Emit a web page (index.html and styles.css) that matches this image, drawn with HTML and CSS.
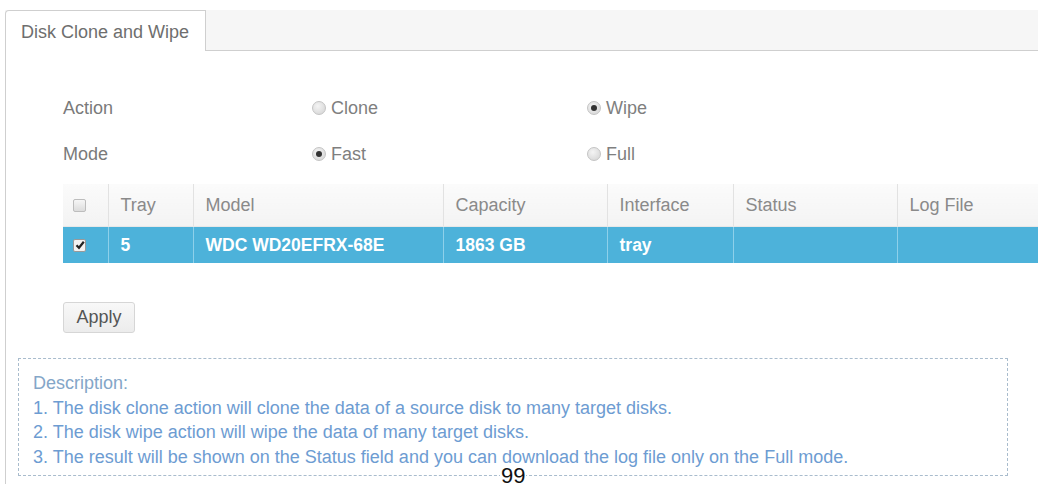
FILE: index.html
```html
<!DOCTYPE html>
<html>
<head>
<meta charset="utf-8">
<link rel="stylesheet" href="styles.css">
</head>
<body>
<div class="page">
  <div class="tabbar">
    <div class="tab">Disk Clone and Wipe</div>
  </div>
  <div class="content">
    <div class="form">
      <div class="label">Action</div>
      <label class="opt"><span class="radio"></span>Clone</label>
      <label class="opt"><span class="radio on"></span>Wipe</label>
      <div class="label">Mode</div>
      <label class="opt"><span class="radio on"></span>Fast</label>
      <label class="opt"><span class="radio"></span>Full</label>
    </div>
    <table class="grid">
      <colgroup>
        <col class="c-chk"><col class="c-tray"><col class="c-model"><col class="c-cap"><col class="c-if"><col class="c-status"><col class="c-log">
      </colgroup>
      <thead>
        <tr>
          <th><span class="cb"></span></th>
          <th>Tray</th>
          <th>Model</th>
          <th>Capacity</th>
          <th>Interface</th>
          <th>Status</th>
          <th>Log File</th>
        </tr>
      </thead>
      <tbody>
        <tr class="sel">
          <td><span class="cb checked"><svg viewBox="0 0 12 12" width="12" height="12"><path d="M2.5 6.2 L5 8.8 L9.8 2.8" fill="none" stroke="#222" stroke-width="2.2"/></svg></span></td>
          <td>5</td>
          <td>WDC WD20EFRX-68E</td>
          <td>1863 GB</td>
          <td>tray</td>
          <td></td>
          <td></td>
        </tr>
      </tbody>
    </table>
    <button class="btn">Apply</button>
    <div class="desc">
      <div class="desc-title">Description:</div>
      <div>1. The disk clone action will clone the data of a source disk to many target disks.</div>
      <div>2. The disk wipe action will wipe the data of many target disks.</div>
      <div>3. The result will be shown on the Status field and you can download the log file only on the Full mode.</div>
    </div>
  </div>
  <div class="pagenum">99</div>
</div>
</body>
</html>
```

FILE: styles.css
```css
html, body {
  margin: 0;
  padding: 0;
  background: #fff;
}
body {
  font-family: "Liberation Sans", Arial, sans-serif;
  font-size: 18px;
  color: #7a7a7a;
  overflow: hidden;
}
.page {
  position: relative;
  padding: 10px 4px 0 5px;
  height: 474px;
}
.tabbar {
  display: flex;
  height: 40px;
  background: #f6f6f6;
  border-bottom: 1px solid #cfcfcf;
}
.tab {
  width: 184px;
  height: 40px;
  padding-left: 15px;
  line-height: 42px;
  background: #fff;
  border: 1px solid #cfcfcf;
  border-bottom: none;
  border-top-left-radius: 4px;
  color: #6e6e6e;
}
.content {
  border-left: 1px solid #cfcfcf;
  padding-top: 34px;
  height: 400px;
}
.form {
  display: grid;
  grid-template-columns: 249px 275px 1fr;
  grid-auto-rows: 46px;
  align-items: center;
  margin-left: 57px;
}
.label {
  color: #7a7a7a;
}
.opt {
  display: flex;
  align-items: center;
  gap: 5px;
  color: #7f7f7f;
}
.radio {
  width: 12px;
  height: 12px;
  border-radius: 50%;
  border: 1px solid #c4c4c4;
  background: radial-gradient(circle at 40% 35%, #f4f4f4 0%, #d2d2d2 100%);
  position: relative;
}
.radio.on::after {
  content: "";
  position: absolute;
  left: 3px;
  top: 3px;
  width: 6px;
  height: 6px;
  border-radius: 50%;
  background: #333;
}
.grid {
  margin: 7px 0 0 57px;
  border-collapse: collapse;
  table-layout: fixed;
  width: 975px;
}
.c-chk { width: 45px; }
.c-tray { width: 85px; }
.c-model { width: 250px; }
.c-cap { width: 164px; }
.c-if { width: 126px; }
.c-status { width: 164px; }
.c-log { width: 141px; }
.grid th {
  height: 42px;
  padding: 0 0 0 12px;
  text-align: left;
  font-weight: normal;
  color: #8a8a8a;
  background: linear-gradient(#fbfbfb, #f3f3f3);
  border-left: 1px solid #e2e2e2;
  border-bottom: 1px solid #e8e8e8;
}
.grid th:first-child, .grid td:first-child {
  border-left: none;
  padding-left: 10px;
}
.grid td {
  height: 36px;
  padding: 0 0 0 12px;
  border-left: 1px solid #8ed0ea;
  font-size: 17.5px;
}
.grid tr.sel td {
  background: #4db2da;
  color: #fff;
  font-weight: bold;
}
.cb {
  display: inline-block;
  width: 11px;
  height: 11px;
  border: 1px solid #bdbdbd;
  border-radius: 2px;
  background: linear-gradient(#f6f6f6, #dcdcdc);
  vertical-align: middle;
}
.cb.checked {
  background: #f2f2f2;
  border-color: #999;
  position: relative;
}
.cb svg {
  position: absolute;
  left: 0;
  top: -1px;
}
.btn {
  display: block;
  margin: 39px 0 0 57px;
  width: 72px;
  height: 31px;
  padding: 0;
  font-family: "Liberation Sans", Arial, sans-serif;
  font-size: 18px;
  color: #555;
  background: linear-gradient(#f8f8f8, #ececec);
  border: 1px solid #d6d6d6;
  border-radius: 3px;
}
.desc {
  margin: 25px 0 0 12px;
  width: 960px;
  padding: 12px 14px 6px 14px;
  border: 1px dashed #a9bccd;
  color: #6d9cd2;
  font-size: 18px;
  line-height: 24.5px;
}
.desc-title {
  color: #84a6c8;
}
.pagenum {
  position: absolute;
  left: 500px;
  top: 467px;
  height: 17px;
  padding: 0 1px;
  background: #fff;
  color: #111;
  font-size: 22px;
  line-height: 17px;
}
```
